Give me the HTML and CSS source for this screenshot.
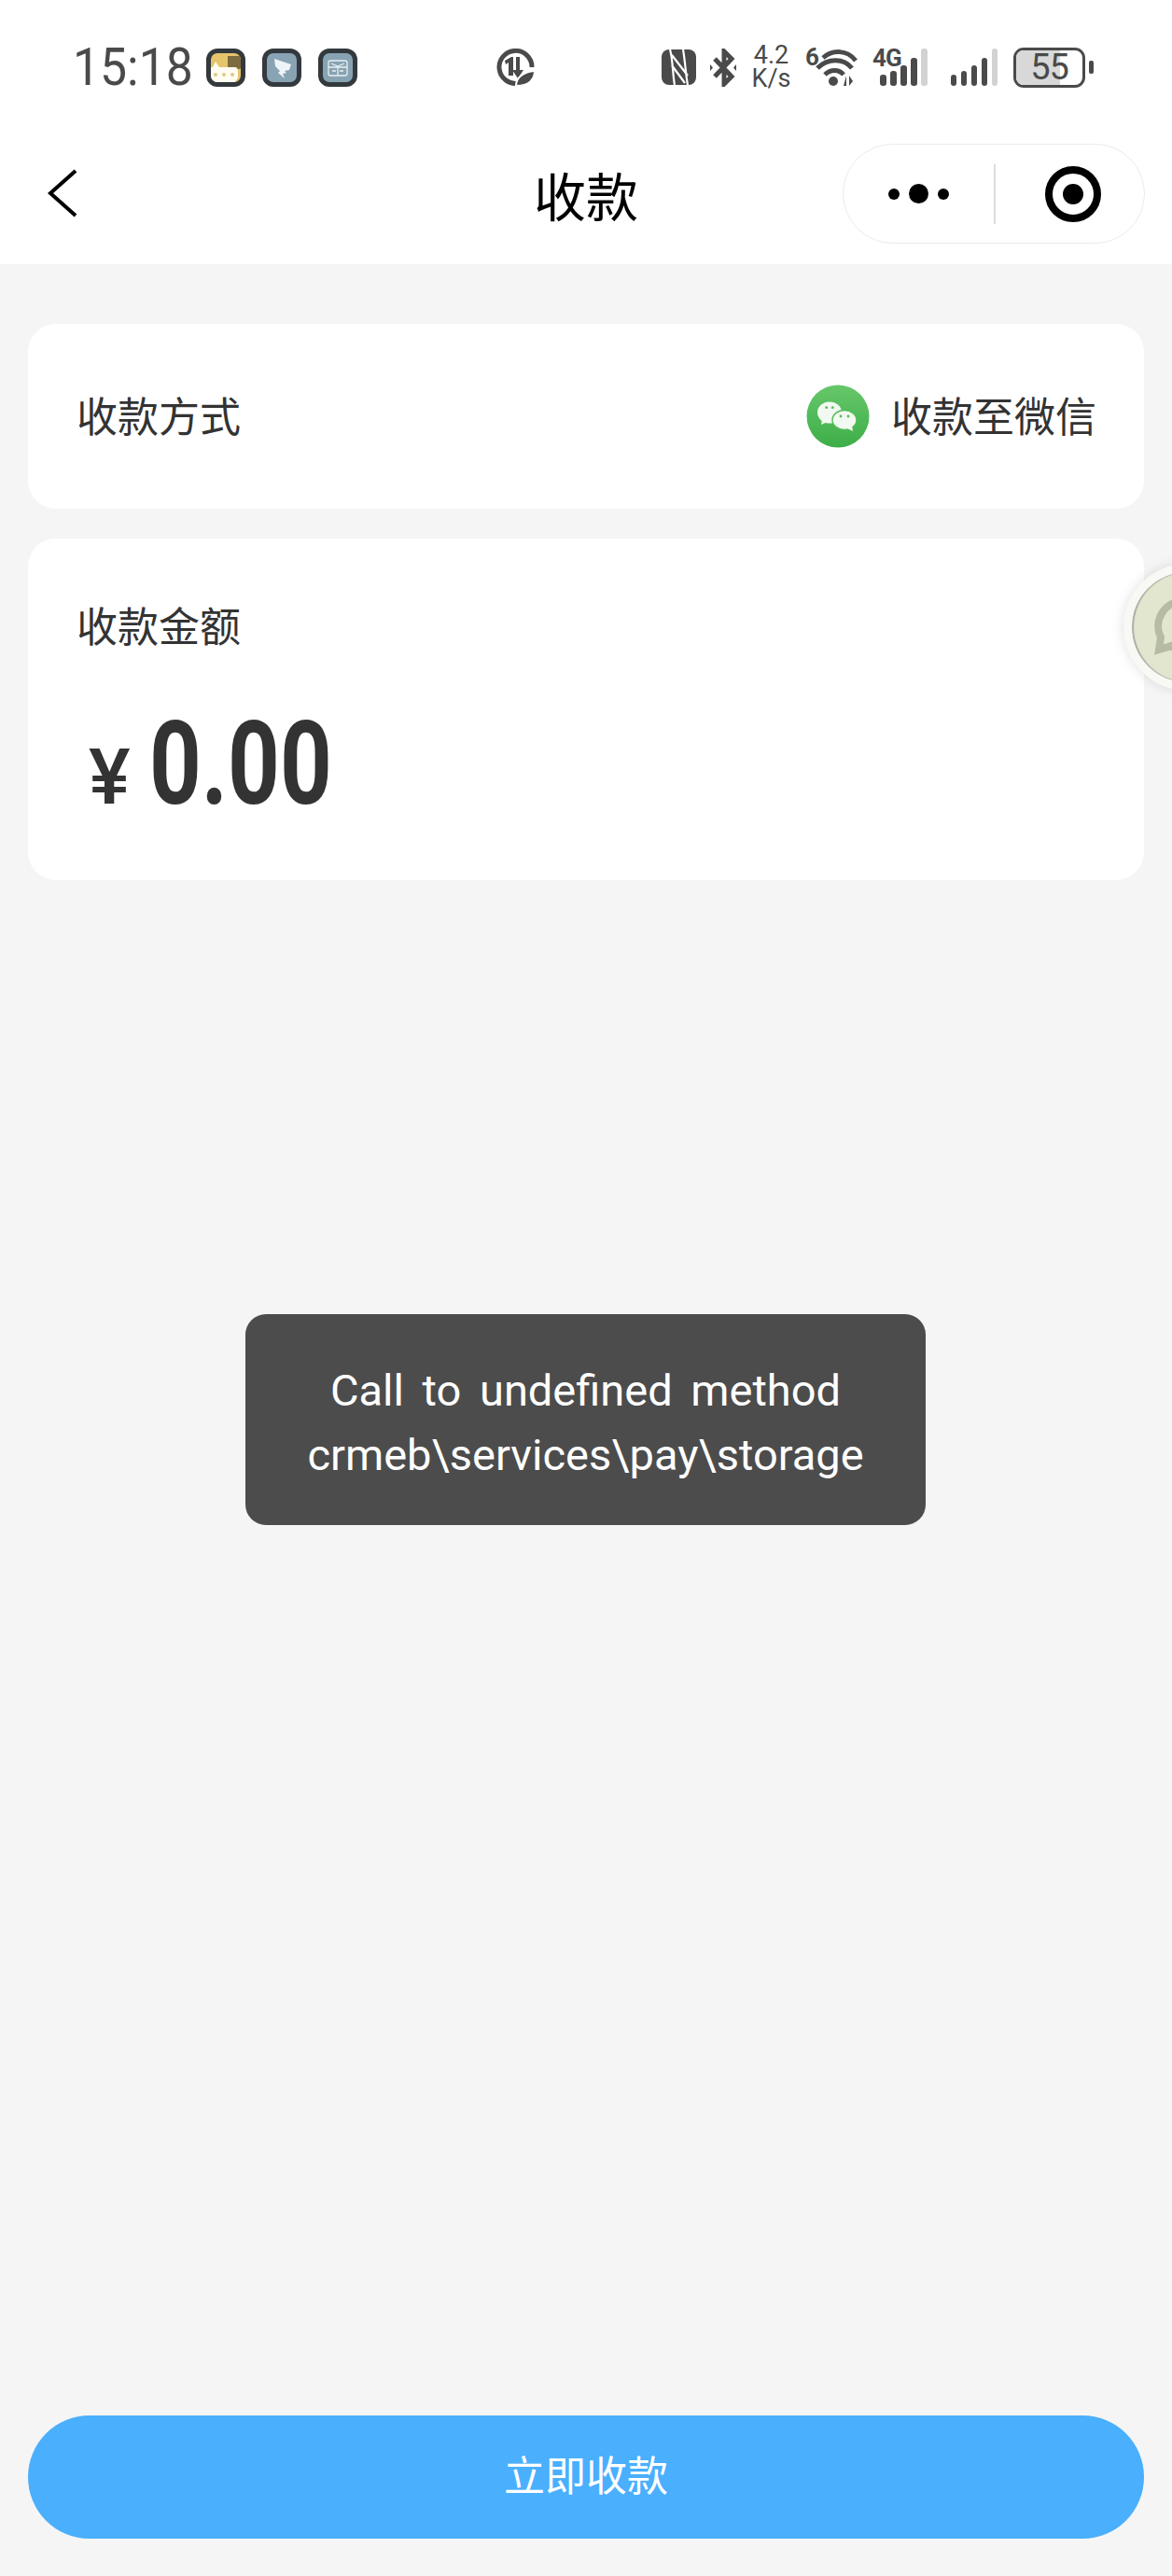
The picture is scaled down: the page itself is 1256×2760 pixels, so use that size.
FILE: index.html
```html
<!DOCTYPE html>
<html lang="zh-CN">
<head>
    <meta charset="UTF-8">
    <meta name="viewport" content="width=device-width, initial-scale=1.0">
    <title>收款</title>
    <link rel="stylesheet" href="styles.css">
</head>
<body>
    <div class="page">

        <!-- Status bar -->
        <div class="status-bar">
            <div class="status-left">
                <span class="clock"><span class="clock-text">15:18</span></span>
                <span class="app-chip chip-yellow">
                    <svg viewBox="0 0 32 31" width="32" height="31">
                        <path d="M16 0h16v12c-5 4-7 1-9 2h-7z" fill="#7d6c3f" transform="translate(2 3)"/>
                        <path d="M0 15h2l3-6 4 6h17c2 0 3 2 3 4v7l-3 5H0z" fill="#fffdf2"/>
                        <circle cx="5" cy="23" r="2" fill="#dccb83"/>
                        <circle cx="14" cy="23" r="2" fill="#dccb83"/>
                        <circle cx="23" cy="23" r="2" fill="#dccb83"/>
                    </svg>
                </span>
                <span class="app-chip chip-blue">
                    <svg viewBox="0 0 32 31" width="32" height="31">
                        <path d="M8 6l18 6-2 6-5 1 2 2-4 1 2 5-7-6 2-2-5-5z" fill="#eef4f7"/>
                    </svg>
                </span>
                <span class="app-chip chip-blue">
                    <svg viewBox="0 0 32 31" width="32" height="31" fill="none" stroke="#e6eff3" stroke-width="1.3">
                        <rect x="6" y="8" width="20" height="16" rx="2"/>
                        <path d="M6 15h20M9 11l7 3 7-3M10 19h4M18 19h4M16 15v9"/>
                    </svg>
                </span>
                <svg class="eco-icon" viewBox="0 0 41 40" width="41" height="40">
                    <path d="M24 37a17.500 17.500 0 1 1 14-17" fill="none" stroke="#4a4a4a" stroke-width="5"/>
                    <path d="M9 13l7-4h2v20h-5V15l-3 2zM21 9h4v14h4l-6 9-6-9h4z" fill="#4a4a4a"/>
                    <path d="M21 40c0-9 8-15 20-16 0 9-6 16-20 16z" fill="#4a4a4a" stroke="#fff" stroke-width="2"/>
                </svg>
            </div>
            <div class="status-right">
                <svg class="nfc-icon" viewBox="0 0 37 38" width="37" height="38">
                    <rect width="37" height="38" rx="8" fill="#4a4a4a"/>
                    <path d="M9 0c3 10 3 28 5 38M23 0c2 10 3 28 5 38M11 6l17 22M11 17l14 19" stroke="#fff" stroke-width="2.200" fill="none"/>
                </svg>
                <svg class="bt-icon" viewBox="0 0 28 41" width="28" height="41">
                    <path d="M5 11l18 19-8 8V3l8 8L5 30" fill="none" stroke="#4a4a4a" stroke-width="5"/>
                    <path d="M0 17l3 3.500L0 24zM28 17l-3 3.500 3 3.500z" fill="#4a4a4a"/>
                </svg>
                <span class="net-speed">4.2 K/s</span>
                <span class="wifi">
                    <span class="wifi-six">6</span>
                    <svg viewBox="0 0 46 40" width="46" height="40" fill="none" stroke="#4a4a4a" stroke-width="5">
                        <path d="M8 10c10-9 26-9 35 3M2 21c11-11 28-11 37 0M10 28c6-6 15-6 20 0"/>
                        <circle cx="19" cy="35" r="5" fill="#4a4a4a" stroke="none"/>
                        <path d="M33 29v11h-3zM36 29v11l4-5z" fill="#4a4a4a" stroke="none"/>
                    </svg>
                </span>
                <span class="signal signal-4g">
                    <span class="sig-label">4G</span>
                    <i class="bar b1"></i><i class="bar b2"></i><i class="bar b3"></i><i class="bar b4"></i><i class="bar off"></i>
                </span>
                <span class="signal">
                    <i class="bar b1"></i><i class="bar b2"></i><i class="bar b3"></i><i class="bar b4"></i><i class="bar off"></i>
                </span>
                <span class="battery">
                    <span class="battery-body"><span class="battery-fill"></span><span class="battery-num">55</span></span>
                    <i class="battery-cap"></i>
                </span>
            </div>
        </div>

        <!-- Title bar with the mini program capsule -->
        <div class="nav-bar">
            <svg class="nav-back" viewBox="0 0 34 54" width="34" height="54">
                <path d="M31 3L4 27l27 24" fill="none" stroke="#000" stroke-width="4"/>
            </svg>
            <h1 class="nav-title">收款</h1>
            <div class="capsule">
                <div class="capsule-more">
                    <i class="dot"></i><i class="dot dot-big"></i><i class="dot"></i>
                </div>
                <i class="capsule-line"></i>
                <div class="capsule-close"><i class="capsule-target"></i></div>
            </div>
        </div>

        <div class="content">
            <div class="card card-method">
                <span class="label">收款方式</span>
                <div class="method">
                    <svg class="wechat-icon" viewBox="0 0 68 68" width="68" height="68">
                        <defs>
                            <linearGradient id="wechatGreen" x1="0" y1="0" x2="0" y2="1">
                                <stop offset="0" stop-color="#66c76a"/>
                                <stop offset="1" stop-color="#3dae48"/>
                            </linearGradient>
                        </defs>
                        <circle cx="34" cy="34" r="33.500" fill="url(#wechatGreen)"/>
                        <ellipse cx="25" cy="30" rx="13" ry="11.500" fill="#f2f9f0"/>
                        <path d="M17 38l-1 5 7-3z" fill="#f2f9f0"/>
                        <ellipse cx="41" cy="38" rx="13" ry="10.500" fill="#f2f9f0" stroke="#55bb5c" stroke-width="1.500"/>
                        <path d="M44 47l6 3-1-6z" fill="#f2f9f0"/>
                        <circle cx="21.700" cy="24.700" r="1.400" fill="#55bb5c"/>
                        <circle cx="28.300" cy="24.700" r="1.400" fill="#55bb5c"/>
                        <circle cx="37" cy="34" r="1.400" fill="#55bb5c"/>
                        <circle cx="45" cy="34" r="1.400" fill="#55bb5c"/>
                    </svg>
                    <span class="label">收款至微信</span>
                </div>
            </div>

            <div class="card card-amount">
                <span class="label">收款金额</span>
                <div class="amount">
                    <span class="amount-unit">¥</span>
                    <span class="amount-num">0.00</span>
                </div>
            </div>
        </div>

        <div class="toast">Call to undefined method<br>crmeb\services\pay\storage</div>

        <!-- Floating service button, half off the edge -->
        <div class="float-service">
            <svg viewBox="0 0 64 64" width="64" height="64">
                <path d="M32 4a27 27 0 0 0-24 39L6 56l13-4a27 27 0 1 0 13-48z" fill="none" stroke="#b6bba4" stroke-width="8"/>
            </svg>
        </div>

        <button class="pay-button">立即收款</button>
    </div>
</body>
</html>
```

FILE: styles.css
```css
* {
    box-sizing: border-box;
}
body {
    margin: 0;
    background-color: #f5f5f5;
    font-family: "Noto Sans CJK SC", "Noto Sans", sans-serif;
}
.page {
    position: relative;
    width: 1256px;
    height: 2760px;
    overflow: hidden;
    display: flex;
    flex-direction: column;
}

/* status bar */
.status-bar {
    height: 142px;
    padding: 50px 84px 0 78px;
    background-color: #fff;
    display: flex;
    justify-content: space-between;
    align-items: flex-start;
    color: #4a4a4a;
    font-family: Roboto, sans-serif;
}
.status-left, .status-right {
    height: 44px;
    display: flex;
    align-items: center;
}
.clock {
    width: 143px;
    font-size: 55px;
    line-height: 44px;
}
/* the phone's clock face is narrower than Roboto */
.clock-text {
    display: inline-block;
    transform: scaleX(0.94);
    transform-origin: left;
}
.app-chip {
    width: 42px;
    height: 41px;
    margin-right: 18px;
    border: 5px solid #33393d;
    border-radius: 12px;
    overflow: hidden;
    flex-shrink: 0;
}
.app-chip svg {
    display: block;
}
.chip-yellow {
    background-color: #e6c46c;
}
.chip-blue {
    background-color: #88a3b3;
}
.eco-icon {
    margin-left: 131px;
}
.nfc-icon {
    margin-left: 2px;
}
.bt-icon {
    margin-left: 15px;
}
/* narrow on purpose, the unit wraps under the number */
.net-speed {
    width: 43px;
    margin: 0 -1px 0 16px;
    font-size: 27px;
    line-height: 25px;
    text-align: center;
}
.wifi {
    position: relative;
    width: 57px;
    height: 40px;
    margin-left: 16px;
    padding-left: 11px;
}
.wifi svg {
    display: block;
}
.wifi-six {
    position: absolute;
    left: 0;
    top: -6px;
    font-size: 26px;
    line-height: 30px;
    font-weight: 700;
}
.signal {
    position: relative;
    display: flex;
    align-items: flex-end;
    gap: 4.500px;
    height: 40px;
    margin-left: 25px;
}
.signal-4g {
    margin-left: 15px;
    padding-left: 8px;
}
.sig-label {
    position: absolute;
    left: 0;
    top: -2px;
    font-size: 26px;
    line-height: 24px;
    font-weight: 700;
    letter-spacing: -1px;
}
.bar {
    width: 6.500px;
    border-radius: 3px;
    background-color: #4a4a4a;
}
.b1 { height: 12px; }
.b2 { height: 16px; }
.b3 { height: 22px; }
.b4 { height: 30px; }
.bar.off {
    height: 40px;
    background-color: #d2d2d2;
}
.battery {
    display: flex;
    align-items: center;
    gap: 4px;
    margin-left: 17px;
}
.battery-body {
    position: relative;
    width: 77px;
    height: 43px;
    border: 3.500px solid #4a4a4a;
    border-radius: 11px;
    overflow: hidden;
}
.battery-fill {
    display: block;
    width: 66%;
    height: 100%;
    background-color: #d8d8d8;
}
.battery-num {
    position: absolute;
    inset: 0;
    text-align: center;
    font-size: 38px;
    line-height: 36px;
    letter-spacing: -1px;
}
.battery-cap {
    width: 5px;
    height: 14px;
    border-radius: 2px;
    background-color: #4a4a4a;
}

/* title bar */
.nav-bar {
    position: relative;
    height: 141px;
    background-color: #fff;
    display: flex;
    align-items: center;
    justify-content: center;
    padding-bottom: 10px;
}
.nav-back {
    position: absolute;
    left: 50px;
    top: 38px;
}
.nav-title {
    margin: 0;
    font-size: 56px;
    font-weight: 400;
    line-height: 70px;
    color: #000;
}
.capsule {
    position: absolute;
    right: 29px;
    top: 12px;
    width: 324px;
    height: 107px;
    display: flex;
    align-items: center;
    border: 1.500px solid #ebebeb;
    border-radius: 54px;
    background-color: #fff;
}
.capsule-more {
    width: 161px;
    display: flex;
    align-items: center;
    justify-content: center;
    gap: 10px;
}
.dot {
    width: 12px;
    height: 12px;
    border-radius: 50%;
    background-color: #000;
}
.dot-big {
    width: 21px;
    height: 21px;
}
.capsule-line {
    width: 2px;
    height: 64px;
    background-color: #dcdcdc;
}
.capsule-close {
    flex: 1;
    padding-left: 6px;
    display: flex;
    align-items: center;
    justify-content: center;
}
.capsule-target {
    width: 60px;
    height: 60px;
    border: 8px solid #000;
    border-radius: 50%;
    display: flex;
    align-items: center;
    justify-content: center;
}
.capsule-target::after {
    content: "";
    width: 22px;
    height: 22px;
    border-radius: 50%;
    background-color: #000;
}

/* cards */
.content {
    padding: 64px 30px 0;
    display: flex;
    flex-direction: column;
    gap: 32px;
}
.card {
    background-color: #fff;
    border-radius: 30px;
}
.card-method {
    height: 198px;
    padding: 0 51px 5px 52px;
    display: flex;
    align-items: center;
    justify-content: space-between;
}
.card-amount {
    height: 366px;
    padding: 62px 52px 0;
}
.label {
    font-size: 44px;
    line-height: 60px;
    color: #333;
}
.method {
    display: flex;
    align-items: center;
    gap: 23px;
}
.wechat-icon {
    margin-top: 4px;
}
.amount {
    margin-top: 60px;
    padding-left: 13px;
    display: flex;
    align-items: baseline;
    gap: 20px;
    color: #333;
    font-family: Roboto, sans-serif;
    font-weight: 700;
    line-height: 120px;
}
.amount-unit {
    font-size: 84px;
    font-weight: 500;
}
/* amount digits use a condensed look, Roboto squeezed a bit */
.amount-num {
    display: inline-block;
    font-size: 124px;
    transform: scaleX(0.785);
    transform-origin: left;
}

/* error toast */
.toast {
    position: absolute;
    left: 263px;
    top: 1408px;
    width: 729px;
    height: 226px;
    padding-top: 47px;
    border-radius: 22px;
    background-color: #4c4c4c;
    color: #fff;
    font-family: Roboto, sans-serif;
    font-size: 47px;
    font-weight: 400;
    line-height: 69px;
    word-spacing: 8px;
    text-align: center;
}

.float-service {
    position: absolute;
    left: 1204px;
    top: 604px;
    width: 136px;
    height: 136px;
    padding: 27px 0 0 23px;
    border-radius: 50%;
    border: 9px solid #f8f9f4;
    background-color: #e3e6cf;
    box-shadow: -2px 0 12px rgba(0, 0, 0, 0.1), inset 2px 0 1px #a9aca6;
}

.pay-button {
    margin: auto 30px 40px;
    height: 132px;
    padding-bottom: 10px;
    border: none;
    border-radius: 66px;
    background-color: #4aaffd;
    color: #fff;
    font-family: "Noto Sans CJK SC", sans-serif;
    font-size: 44px;
}
```
